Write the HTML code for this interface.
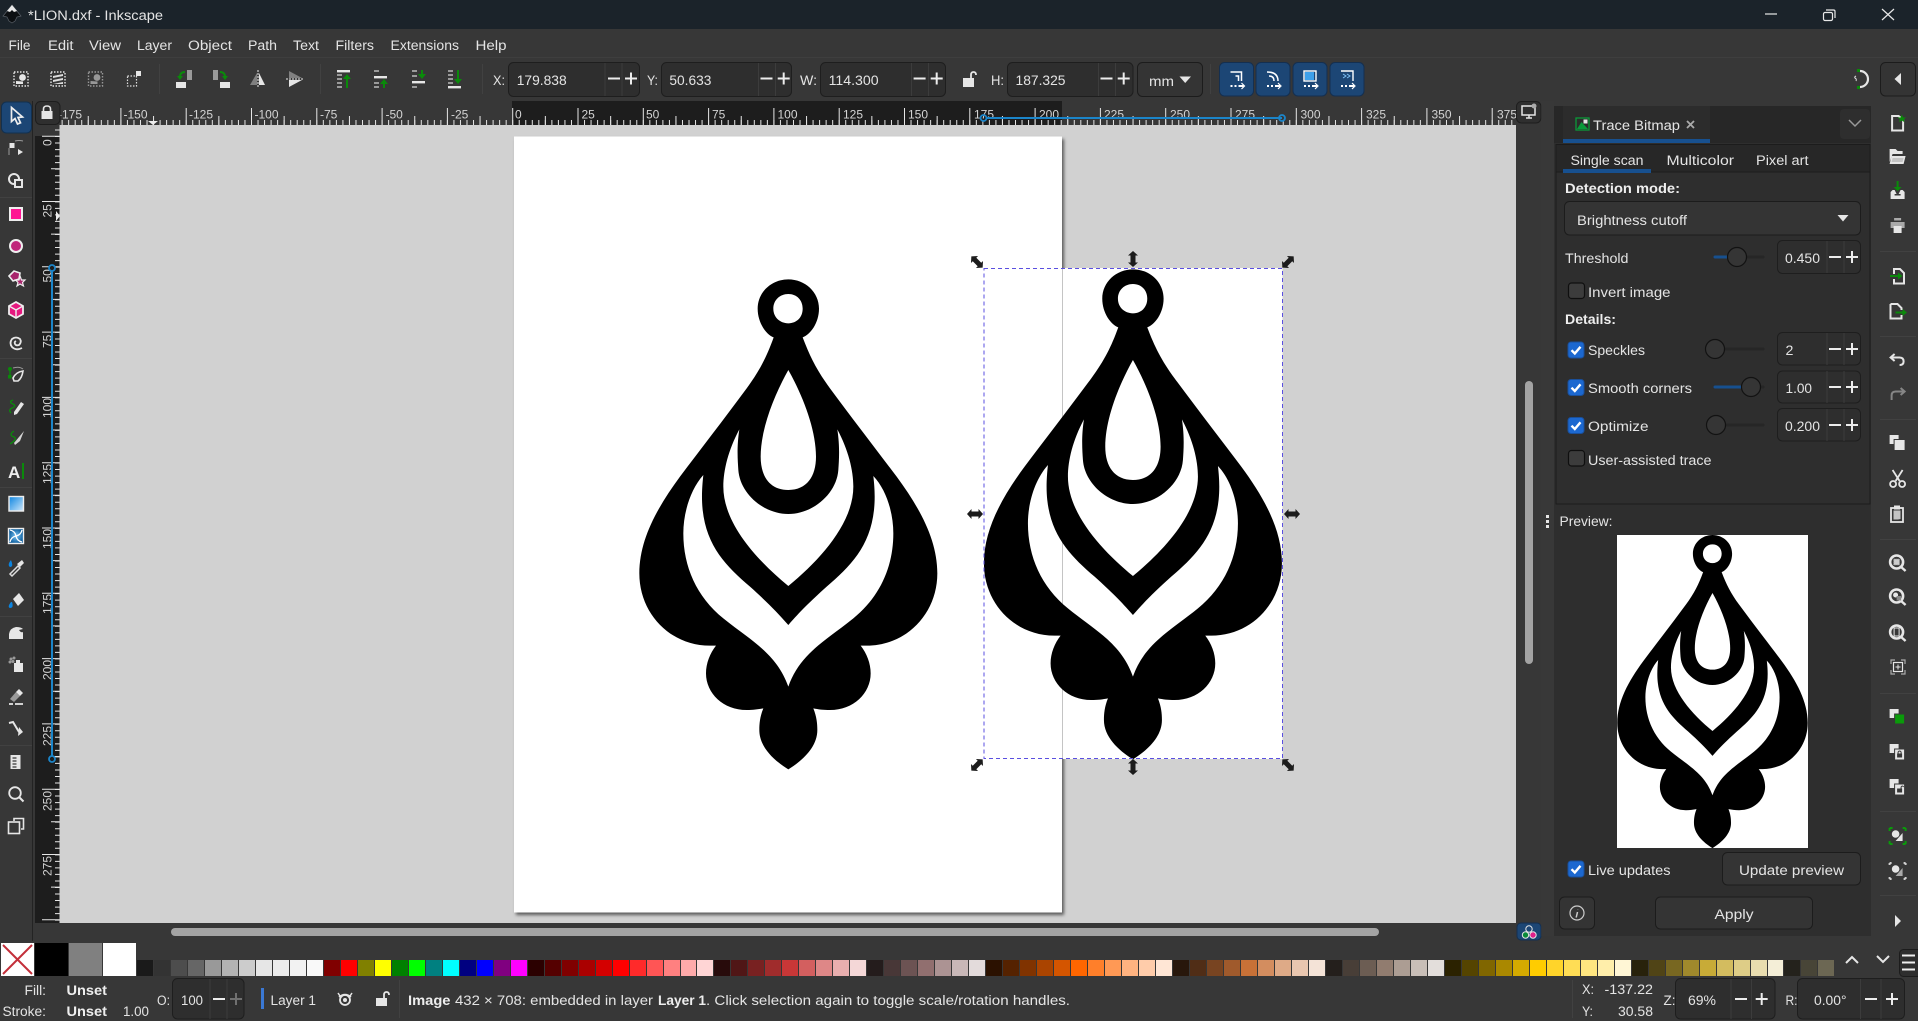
<!DOCTYPE html>
<html lang="en"><head><meta charset="utf-8"><title>*LION.dxf - Inkscape</title>
<style>
html,body{margin:0;padding:0;background:#373737;width:1918px;height:1021px;overflow:hidden}
svg{position:absolute;left:0;top:0;display:block}
text{font-family:"Liberation Sans",sans-serif;font-size:14.2px;fill:#e4e4e4}
.b{font-weight:bold;fill:#eee}
.r{font-size:12px;fill:#d4d4d4}
.i{fill:none;stroke:#e6e6e6;stroke-width:2.6}
.f{fill:#e6e6e6}
.g{fill:#0a8a0a}
.gs{fill:none;stroke:#0a8a0a;stroke-width:2}
.gt{fill:none;stroke:#0a8a0a;stroke-width:1.3}
.d{fill:#8a8a8a}
.in{fill:#2e2e2e;stroke:#1e1e1e;stroke-width:1}
.bt{fill:#343434;stroke:#1c1c1c;stroke-width:1}
.sp{stroke:#ececec;stroke-width:2;fill:none}
.sl{stroke:#3c3c3c;stroke-width:1;fill:none}
.sep{stroke:#414141;stroke-width:1}
.ck{fill:#1c68d0;stroke:#1a4f9a}
.ckm{fill:none;stroke:#fff;stroke-width:2.4}
.un{fill:#3c3c3c;stroke:#0f0f0f;stroke-width:1.2}
.trk{stroke:#262626;stroke-width:3;stroke-linecap:round}
.kn{fill:#353535;stroke:#121212;stroke-width:1.2}
#pal{position:absolute;left:137px;top:960px;width:1699px;height:16px;display:flex}
#pal i{flex:1;display:block;border-right:1px solid #373737}
#big{position:absolute;left:35px;top:943px;height:33px;display:flex}
#big i{width:33px;height:33px;margin-right:1px;display:block}
</style></head><body>
<svg width="1918" height="1021" viewBox="0 0 1918 1021" xmlns="http://www.w3.org/2000/svg">
<defs>
<path id="sh" fill-rule="evenodd" d="M608 232C630 290 650 330 690 385C760 480 830 570 890 650C960 745 1012 840 1012 940C1012 1060 920 1157 800 1157L782 1157C800 1180 812 1210 812 1240C812 1300 760 1350 690 1350C670 1350 655 1348 640 1345C650 1370 652 1390 652 1410C652 1460 610 1500 565 1528C520 1500 478 1460 478 1410C478 1390 480 1370 490 1345C475 1348 460 1350 440 1350C370 1350 318 1300 318 1240C318 1210 330 1180 348 1157L330 1157C210 1157 118 1060 118 940C118 840 170 745 240 650C300 570 370 480 440 385C480 330 500 290 521 232C500 225 473 190 473 146C473 96 515 58 565 58C615 58 657 96 657 146C657 190 630 225 608 232Z
M565 102C590 102 608 120 608 146C608 172 590 190 565 190C540 190 520 172 520 146C520 120 540 102 565 102Z
M565 330C610 410 648 510 648 590C648 650 620 690 565 690C510 690 482 650 482 590C482 510 520 410 565 330Z
M712 508C745 570 760 630 760 680C760 790 660 900 565 978C470 900 370 790 370 680C370 630 385 570 418 508C410 560 413 600 415 630C420 700 490 762 565 762C640 762 710 700 715 630C717 600 720 560 712 508Z
M820 648C860 690 880 760 880 820C880 920 840 1010 760 1075C680 1140 600 1180 565 1280C530 1180 450 1140 370 1075C290 1010 250 920 250 820C250 760 270 690 310 645C305 690 305 720 308 750C320 860 380 920 450 980C500 1025 530 1055 565 1095C600 1055 630 1025 680 980C750 920 810 860 822 750C825 720 825 690 820 648Z"/>
<path id="ha" d="M-8 0L-3.5-5V-2.500H3.500V-5L8 0L3.500 5V2.500H-3.500V5Z" fill="#1c1c1c"/>
<path id="m" class="sp" d="M-6 0H6"/>
<path id="p" class="sp" d="M-6 0H6M0-6V6"/>
<g id="ckg"><rect class="ck" x="0" y="0" width="16" height="16" rx="3"/><path class="ckm" d="M3.500 8.200L6.800 11.500L12.500 4.800"/></g>
<clipPath id="cv"><rect x="59.500" y="125" width="1456.500" height="798"/></clipPath>
<clipPath id="tr"><rect x="60" y="101" width="1456" height="24"/></clipPath>
<filter id="bl" x="-5%" y="-5%" width="110%" height="110%"><feGaussianBlur stdDeviation="1.6"/></filter>
<linearGradient id="gr" x1="0" y1="0" x2="1" y2="1"><stop offset="0" stop-color="#0b84e0"/><stop offset="1" stop-color="#cfe8fb"/></linearGradient>
<radialGradient id="me"><stop offset="0" stop-color="#7cc6f5"/><stop offset="1" stop-color="#0f5f9e"/></radialGradient>
</defs>

<rect width="1918" height="1021" fill="#373737"/>
<rect width="1918" height="29" fill="#1b232a"/>
<path d="M0 57.500H1918" stroke="#3e3e3e"/>

<g transform="translate(12,14)"><path d="M0-9L9 2L5 3L3 7L0 9L-3 7L-5 3L-9 2Z" fill="#0c0f12" stroke="#5a6068" stroke-width=".7"/><path d="M0-9L5-3L2-2L0-4L-2-2L-5-3Z" fill="#e8e8e8"/></g>
<text x="28" y="20" textLength="135" lengthAdjust="spacingAndGlyphs">*LION.dxf - Inkscape</text>
<path d="M1765 14H1777" stroke="#e8e8e8" stroke-width="1.200"/>
<g fill="none" stroke="#e8e8e8" stroke-width="1.200"><rect x="1823.500" y="12.500" width="9" height="8" rx="1.500"/><path d="M1826 10H1833.500Q1835 10 1835 11.500V18"/><path d="M1882 9L1894 20M1894 9L1882 20"/></g>

<text x="8.500" y="50" textLength="22" lengthAdjust="spacingAndGlyphs">File</text>
<text x="48" y="50" textLength="25.500" lengthAdjust="spacingAndGlyphs">Edit</text>
<text x="89" y="50" textLength="32" lengthAdjust="spacingAndGlyphs">View</text>
<text x="137" y="50" textLength="35" lengthAdjust="spacingAndGlyphs">Layer</text>
<text x="188" y="50" textLength="44" lengthAdjust="spacingAndGlyphs">Object</text>
<text x="248" y="50" textLength="29" lengthAdjust="spacingAndGlyphs">Path</text>
<text x="293" y="50" textLength="26" lengthAdjust="spacingAndGlyphs">Text</text>
<text x="335.500" y="50" textLength="38.500" lengthAdjust="spacingAndGlyphs">Filters</text>
<text x="390.500" y="50" textLength="68.500" lengthAdjust="spacingAndGlyphs">Extensions</text>
<text x="475.500" y="50" textLength="31" lengthAdjust="spacingAndGlyphs">Help</text>

<g transform="translate(21,79)"><rect x="-7" y="-7" width="14" height="14" fill="none" stroke="#e6e6e6" stroke-width="1.400" stroke-dasharray="1.500 1.500"/><circle cx="1.500" cy="-1.500" r="3.400" class="f"/><path d="M-5 5V2L2 2.500V5Z" class="f"/></g>
<g transform="translate(58,79)"><rect x="-7" y="-7" width="14" height="14" fill="none" stroke="#e6e6e6" stroke-width="1.400" stroke-dasharray="1.500 1.500"/><path d="M-5-3L5-5V-3L-5-1ZM-5 1L5-1V1L-5 3ZM-5 5L5 3V5Z" fill="#ddd"/></g>
<g transform="translate(95.500,79)" opacity=".55"><rect x="-7" y="-7" width="14" height="14" fill="none" stroke="#e6e6e6" stroke-width="1.400" stroke-dasharray="1.500 1.500"/><circle cx="1.500" cy="-1.500" r="3.400" class="f"/><path d="M-5 5V2L2 2.500V5Z" class="f"/></g>
<g transform="translate(133,79)"><rect x="-5.500" y="-3" width="9" height="10" fill="none" stroke="#ddd" stroke-width="1.200" stroke-dasharray="1.500 1.500"/><rect x="3" y="-8" width="5" height="5" class="f"/></g>
<path class="sep" d="M159.500 64V94M320.500 64V94M482.500 64V94"/>
<g transform="translate(184,79)"><rect x="-8" y="3" width="10" height="6" class="f"/><rect x="3" y="-9" width="5" height="10" fill="#9a9a9a"/><path class="gs" d="M1-7Q-4-7-4-2"/><path class="g" d="M-7-3H-1L-4 1Z"/></g>
<g transform="translate(221,79)"><rect x="-1" y="3" width="10" height="6" class="f"/><rect x="-8" y="-9" width="5" height="10" fill="#9a9a9a"/><path class="gs" d="M-1-7Q4-7 4-2"/><path class="g" d="M7-3H1L4 1Z"/></g>
<g transform="translate(258,79)"><path d="M-1-6L-8 6H-1Z" fill="#808080"/><path d="M1-6L7 6H1Z" class="f"/><path d="M0-9V9" stroke="#eee" stroke-width="1" stroke-dasharray="2 1"/></g>
<g transform="translate(295,79)"><path d="M-6-8L7-1H-6Z" fill="#808080"/><path d="M-6 1H7L-6 8Z" class="f"/><path d="M-9 0H9" stroke="#eee" stroke-width="1" stroke-dasharray="2 1"/></g>
<g transform="translate(345,79)"><rect x="-8" y="-9" width="13" height="2.400" class="f"/><path d="M-8-4H-3M-8 0H-3M-8 4H-3M-8 8H-3" stroke="#9a9a9a" stroke-width="2"/><path class="gs" d="M2 9V-2"/><path class="g" d="M2-5L6 0H-2Z"/></g>
<g transform="translate(382,79)"><path d="M-8-8H-3M-8 4H-3M-8 8H-3" stroke="#9a9a9a" stroke-width="2"/><rect x="-8" y="-3" width="13" height="2.400" class="f"/><path class="gs" d="M2 9V4"/><path class="g" d="M2 0L6 5H-2Z"/></g>
<g transform="translate(420,79)"><path d="M-8-8H-3M-8-3H-3M-8 8H-3" stroke="#9a9a9a" stroke-width="2"/><rect x="-8" y="2" width="13" height="2.400" class="f"/><path class="gs" d="M2-9V-4"/><path class="g" d="M2 0L6-5H-2Z"/></g>
<g transform="translate(456,79)"><path d="M-8-8H-3M-8-4H-3M-8 0H-3M-8 4H-3" stroke="#9a9a9a" stroke-width="2"/><rect x="-8" y="7" width="13" height="2.400" class="f"/><path class="gs" d="M2-9V2"/><path class="g" d="M2 5L6 0H-2Z"/></g>

<text x="493" y="85" textLength="12" lengthAdjust="spacingAndGlyphs">X:</text>
<rect class="in" x="508.500" y="62.500" width="131" height="34" rx="5"/><path class="sl" d="M605 63V96M622 63V96"/>
<text x="516.700" y="85" textLength="50" lengthAdjust="spacingAndGlyphs">179.838</text>
<use href="#m" x="614" y="78.500"/><use href="#p" x="631" y="78.500"/>
<text x="647" y="85" textLength="11" lengthAdjust="spacingAndGlyphs">Y:</text>
<rect class="in" x="661.500" y="62.500" width="130" height="34" rx="5"/><path class="sl" d="M758.500 63V96M775.500 63V96"/>
<text x="669.400" y="85" textLength="42" lengthAdjust="spacingAndGlyphs">50.633</text>
<use href="#m" x="766.500" y="78.500"/><use href="#p" x="783.700" y="78.500"/>
<text x="800" y="85" textLength="17" lengthAdjust="spacingAndGlyphs">W:</text>
<rect class="in" x="820.500" y="62.500" width="125" height="34" rx="5"/><path class="sl" d="M911.500 63V96M928.500 63V96"/>
<text x="828.600" y="85" textLength="50" lengthAdjust="spacingAndGlyphs">114.300</text>
<use href="#m" x="919.600" y="78.500"/><use href="#p" x="936.700" y="78.500"/>
<g transform="translate(969,80)"><rect x="-6" y="-2" width="11" height="9" class="f"/><path d="M2-2V-5Q2-8 4.500-8Q7-8 7-5" fill="none" stroke="#e6e6e6" stroke-width="1.800"/></g>
<text x="991" y="85" textLength="13" lengthAdjust="spacingAndGlyphs">H:</text>
<rect class="in" x="1007.500" y="62.500" width="125.500" height="34" rx="5"/><path class="sl" d="M1098.500 63V96M1115.500 63V96"/>
<text x="1015.500" y="85" textLength="50" lengthAdjust="spacingAndGlyphs">187.325</text>
<use href="#m" x="1106.500" y="78.500"/><use href="#p" x="1123.700" y="78.500"/>
<rect class="bt" x="1137.500" y="62.500" width="65" height="34" rx="5"/>
<text x="1149" y="86" textLength="25" lengthAdjust="spacingAndGlyphs">mm</text>
<path d="M1179.500 76.500H1191L1185.200 83Z" fill="#e6e6e6"/>
<path class="sep" d="M1210.500 64V94"/>

<g fill="#1c4675" stroke="#142f50"><rect x="1219.500" y="62.500" width="34" height="33.500" rx="5"/><rect x="1256" y="62.500" width="34" height="33.500" rx="5"/><rect x="1293" y="62.500" width="34" height="33.500" rx="5"/><rect x="1330" y="62.500" width="34" height="33.500" rx="5"/></g>
<g transform="translate(1236.500,79)" fill="none" stroke="#fff" stroke-width="1.500"><path d="M-6-7H5V2M-1-3H2V2"/><path d="M-6 7H-4M-2 7H0M2 7H7" stroke-width="2"/><path d="M5 4L8 7L5 10" stroke-width="1.200"/></g>
<g transform="translate(1273,79)" fill="none" stroke="#fff" stroke-width="1.500"><path d="M-6-7Q5-7 5 2M-4-3Q1-3 1 2"/><path d="M-6 7H-4M-2 7H0M2 7H7" stroke-width="2"/><path d="M5 4L8 7L5 10" stroke-width="1.200"/></g>
<g transform="translate(1310,79)"><rect x="-6" y="-8" width="12" height="10" fill="none" stroke="#fff" stroke-width="1.400"/><rect x="-5" y="-7" width="9" height="8" fill="#3da0ea"/><path d="M-6 7H-4M-2 7H0M2 7H7" stroke="#fff" stroke-width="2"/><path d="M5 4L8 7L5 10" fill="none" stroke="#fff" stroke-width="1.200"/></g>
<g transform="translate(1347,79)"><path d="M-6-8H6V2" fill="none" stroke="#fff" stroke-width="1.400"/><path d="M-4-5L-1-3L-4-1M0-5L3-3L0-1" fill="none" stroke="#7cc0f5" stroke-width="1"/><path d="M-6 7H-4M-2 7H0M2 7H7" stroke="#fff" stroke-width="2"/><path d="M5 4L8 7L5 10" fill="none" stroke="#fff" stroke-width="1.200"/></g>

<g transform="translate(1861,79)"><path d="M-1-8A8 8 0 1 1-1 8" fill="none" stroke="#e6e6e6" stroke-width="2.200"/><rect x="-4" y="-10" width="3" height="3" class="g"/><rect x="-4" y="7" width="3" height="3" class="g"/><path d="M-5-3Q-7-2-6-1Q-4 0-5 2" fill="none" stroke="#ddd" stroke-width="1"/></g>
<rect class="bt" x="1880.500" y="62.500" width="35" height="33.500" rx="5"/>
<path d="M1901 73V85L1894.500 79Z" class="f"/>

<path d="M32.500 101V941" stroke="#232323"/>
<rect x="35" y="136" width="25" height="787" fill="#1d1d1d"/>
<rect x="512" y="101" width="550" height="24" fill="#1d1d1d"/>

<g clip-path="url(#tr)" stroke="#e6e6e6" stroke-width="1">
<path d="M55.100 122.500H1516" stroke-width="5" stroke-dasharray="1 5.530" fill="none"/>
<path d="M87.750 120.500H1516" stroke-width="9" stroke-dasharray="1 64.300" fill="none"/>
<path d="M55.100 116.500H1516" stroke-width="17" stroke-dasharray="1 64.300" fill="none"/>
</g>
<g clip-path="url(#tr)">
<text class="r" x="58" y="118.500">-175</text><text class="r" x="123.500" y="118.500">-150</text><text class="r" x="189" y="118.500">-125</text><text class="r" x="254.500" y="118.500">-100</text><text class="r" x="320" y="118.500">-75</text><text class="r" x="385.500" y="118.500">-50</text><text class="r" x="451" y="118.500">-25</text>
<text class="r" x="515" y="118.500">0</text><text class="r" x="581.500" y="118.500">25</text><text class="r" x="646" y="118.500">50</text><text class="r" x="712" y="118.500">75</text><text class="r" x="777.500" y="118.500">100</text><text class="r" x="843" y="118.500">125</text><text class="r" x="908" y="118.500">150</text><text class="r" x="974" y="118.500">175</text><text class="r" x="1039" y="118.500">200</text><text class="r" x="1104" y="118.500">225</text><text class="r" x="1170" y="118.500">250</text><text class="r" x="1235" y="118.500">275</text><text class="r" x="1300.500" y="118.500">300</text><text class="r" x="1366" y="118.500">325</text><text class="r" x="1431.500" y="118.500">350</text><text class="r" x="1497" y="118.500">375</text>
</g>
<path d="M148 121H158L153 125Z" fill="#eee"/>
<path d="M986 118H1282" stroke="#1b85c9" stroke-width="2" fill="none"/>
<circle cx="983.500" cy="118" r="3" fill="none" stroke="#1b85c9" stroke-width="1.800"/><circle cx="1282" cy="118" r="3" fill="none" stroke="#1b85c9" stroke-width="1.800"/>

<path d="M57.500 129.500V923" stroke="#e6e6e6" stroke-width="5" stroke-dasharray="1 5.530" fill="none"/>
<path d="M55.500 168.300V923" stroke="#e6e6e6" stroke-width="9" stroke-dasharray="1 64.300" fill="none"/>
<path d="M51 135.700V923" stroke="#e6e6e6" stroke-width="18" stroke-dasharray="1 64.300" fill="none"/>
<g>
<text class="r" transform="translate(51.500,146) rotate(-90)">0</text>
<text class="r" transform="translate(51.500,217.500) rotate(-90)">25</text>
<text class="r" transform="translate(51.500,282.500) rotate(-90)">50</text>
<text class="r" transform="translate(51.500,348) rotate(-90)">75</text>
<text class="r" transform="translate(51.500,418) rotate(-90)">100</text>
<text class="r" transform="translate(51.500,484) rotate(-90)">125</text>
<text class="r" transform="translate(51.500,549) rotate(-90)">150</text>
<text class="r" transform="translate(51.500,614) rotate(-90)">175</text>
<text class="r" transform="translate(51.500,680) rotate(-90)">200</text>
<text class="r" transform="translate(51.500,746) rotate(-90)">225</text>
<text class="r" transform="translate(51.500,811) rotate(-90)">250</text>
<text class="r" transform="translate(51.500,876) rotate(-90)">275</text>
</g>
<path d="M56 211V221L60 216Z" fill="#eee"/>
<path d="M52 270V760" stroke="#1b85c9" stroke-width="2"/>
<circle cx="52" cy="268" r="3" fill="#1d1d1d" stroke="#1b85c9" stroke-width="1.800"/><circle cx="52" cy="759" r="3" fill="#1d1d1d" stroke="#1b85c9" stroke-width="1.800"/>

<rect x="35.500" y="101.500" width="24.500" height="23" rx="5" fill="#2f2f2f" stroke="#1e1e1e"/>
<g transform="translate(47,113)"><rect x="-5.500" y="-2" width="11" height="8" class="f"/><path d="M-3.500-2V-4Q-3.500-7 0-7Q3.500-7 3.500-4V-2" fill="none" stroke="#e6e6e6" stroke-width="1.600"/></g>

<g clip-path="url(#cv)">
<rect x="59.500" y="125" width="1456.500" height="798" fill="#d1d1d1"/>
<rect x="516" y="139" width="548" height="776" fill="#5a5a5a" filter="url(#bl)"/>
<rect x="514" y="136.500" width="548" height="776" fill="#fff"/>
<use href="#sh" transform="translate(600,260) scale(.33333)"/>
<rect x="984" y="268" width="298.500" height="491" fill="#fff"/>
<path d="M1062.500 268V759" stroke="#c4c4c4"/>
<use href="#sh" transform="translate(944.600,250) scale(.33333)"/>
<rect x="984" y="268.500" width="298.500" height="490" fill="none" stroke="#5a4fe0" stroke-width="1" stroke-dasharray="4 3"/>
<use href="#ha" transform="translate(977,262) rotate(45)"/>
<use href="#ha" transform="translate(1288,262) rotate(-45)"/>
<use href="#ha" transform="translate(977,765) rotate(-45)"/>
<use href="#ha" transform="translate(1288,765) rotate(45)"/>
<use href="#ha" transform="translate(1133,259) rotate(90)"/>
<use href="#ha" transform="translate(1133,767) rotate(90)"/>
<use href="#ha" transform="translate(975,514)"/>
<use href="#ha" transform="translate(1292,514)"/>
</g>

<rect x="171" y="928" width="1208" height="8" rx="4" fill="#a3a3a3"/>
<rect x="1525" y="381" width="8" height="283" rx="4" fill="#a3a3a3"/>
<rect x="1516.500" y="101.500" width="24.500" height="21.500" rx="5" fill="#2f2f2f" stroke="#1e1e1e"/>
<g transform="translate(1529,112)"><rect x="-7" y="-6" width="13" height="9" fill="none" stroke="#e6e6e6" stroke-width="1.500"/><path d="M-3 6H3M0 3V6" stroke="#e6e6e6" stroke-width="1.500"/><circle cx="5" cy="-6" r="2.500" fill="#aaa"/></g>
<rect x="1517" y="923" width="24" height="17" rx="4" fill="#1c4675" stroke="#142f50"/>
<g fill="none" stroke="#e6e6e6" stroke-width="1"><circle cx="1529" cy="929" r="3.200"/></g><circle cx="1525.500" cy="935" r="3.200" fill="#0a8a3a" stroke="#e6e6e6"/><circle cx="1533" cy="935" r="3.200" fill="#e0208a" stroke="#e6e6e6"/>

<rect x="1541" y="101" width="13" height="835" fill="#3a3a3a" opacity=".5"/>
<rect x="1554" y="106" width="317" height="830" fill="#2e2e2e"/>
<rect x="1554" y="106" width="317" height="37" fill="#272727"/>
<rect x="1563" y="106" width="147" height="37" fill="#2c2c2c"/>
<rect x="1563" y="139" width="147" height="4" fill="#17508f"/>
<rect x="1576" y="118" width="13" height="12" fill="none" stroke="#0a9a3a" stroke-width="1.300"/><path d="M1577 129L1581.500 122L1588 129Z" fill="#0a9a3a"/><rect x="1583.500" y="119.500" width="4" height="4" fill="#e6e6e6"/>
<text x="1593" y="130" textLength="87" lengthAdjust="spacingAndGlyphs">Trace Bitmap</text>
<path d="M1687 121L1694 128M1694 121L1687 128" stroke="#aaa" stroke-width="1.800"/>
<rect x="1840" y="109" width="30" height="30" rx="4" fill="#2e2e2e"/>
<path d="M1849 120L1855 126L1861 120" fill="none" stroke="#999" stroke-width="1.500"/>

<rect x="1556" y="144.500" width="314" height="359.500" fill="#2e2e2e" stroke="#1c1c1c"/>
<rect x="1556.500" y="145" width="313" height="27" fill="#272727"/>
<path d="M1556 172H1870" stroke="#1c1c1c"/>
<rect x="1563" y="169" width="88" height="4" fill="#17508f"/>
<text x="1570.500" y="165" textLength="73" lengthAdjust="spacingAndGlyphs">Single scan</text>
<text x="1666.500" y="165" textLength="67.500" lengthAdjust="spacingAndGlyphs">Multicolor</text>
<text x="1756" y="165" textLength="52.500" lengthAdjust="spacingAndGlyphs">Pixel art</text>

<text class="b" x="1565" y="193" textLength="115" lengthAdjust="spacingAndGlyphs">Detection mode:</text>
<rect class="bt" x="1564.500" y="201.500" width="296" height="33.500" rx="5"/>
<text x="1577" y="225" textLength="110" lengthAdjust="spacingAndGlyphs">Brightness cutoff</text>
<path d="M1837.500 215H1848.500L1843 221.500Z" class="f"/>

<text x="1565" y="263" textLength="63.500" lengthAdjust="spacingAndGlyphs">Threshold</text>
<path class="trk" d="M1716 257H1763"/><path d="M1715 257H1730" stroke="#17508f" stroke-width="3" stroke-linecap="round"/>
<circle class="kn" cx="1737" cy="257" r="9.500"/>
<rect class="in" x="1777.500" y="240.500" width="83" height="33" rx="5"/><path class="sl" d="M1827 241V273M1844 241V273"/>
<text x="1785" y="263" textLength="35" lengthAdjust="spacingAndGlyphs">0.450</text>
<use href="#m" x="1835" y="257"/><use href="#p" x="1852" y="257"/>

<rect class="un" x="1568.500" y="283" width="16" height="15.500" rx="3"/>
<text x="1588" y="297" textLength="82.500" lengthAdjust="spacingAndGlyphs">Invert image</text>
<text class="b" x="1565" y="324" textLength="51" lengthAdjust="spacingAndGlyphs">Details:</text>

<use href="#ckg" x="1568" y="342"/>
<text x="1588" y="355" textLength="57" lengthAdjust="spacingAndGlyphs">Speckles</text>
<path class="trk" d="M1716 349H1763"/><circle class="kn" cx="1715" cy="349" r="9.500"/>
<rect class="in" x="1777.500" y="332.500" width="83" height="32.500" rx="5"/><path class="sl" d="M1827 333V365M1844 333V365"/>
<text x="1785.500" y="355">2</text>
<use href="#m" x="1835" y="349"/><use href="#p" x="1852" y="349"/>

<use href="#ckg" x="1568" y="379.500"/>
<text x="1588" y="393" textLength="104" lengthAdjust="spacingAndGlyphs">Smooth corners</text>
<path class="trk" d="M1716 387H1763"/><path d="M1715 387H1743" stroke="#17508f" stroke-width="3" stroke-linecap="round"/>
<circle class="kn" cx="1751" cy="387" r="9.500"/>
<rect class="in" x="1777.500" y="371" width="83" height="32" rx="5"/><path class="sl" d="M1827 371V403M1844 371V403"/>
<text x="1785.500" y="393" textLength="26.500" lengthAdjust="spacingAndGlyphs">1.00</text>
<use href="#m" x="1835" y="387"/><use href="#p" x="1852" y="387"/>

<use href="#ckg" x="1568" y="417.500"/>
<text x="1588" y="431" textLength="60.500" lengthAdjust="spacingAndGlyphs">Optimize</text>
<path class="trk" d="M1716 425H1763"/><circle class="kn" cx="1716" cy="425" r="9.500"/>
<rect class="in" x="1777.500" y="408.500" width="83" height="32.500" rx="5"/><path class="sl" d="M1827 409V441M1844 409V441"/>
<text x="1785" y="431" textLength="35" lengthAdjust="spacingAndGlyphs">0.200</text>
<use href="#m" x="1835" y="425"/><use href="#p" x="1852" y="425"/>

<rect class="un" x="1568.500" y="450.500" width="16" height="15.500" rx="3"/>
<text x="1588" y="465" textLength="123.500" lengthAdjust="spacingAndGlyphs">User-assisted trace</text>

<g class="f"><rect x="1546" y="515" width="3" height="3"/><rect x="1546" y="520" width="3" height="3"/><rect x="1546" y="525" width="3" height="3"/></g>
<text x="1559.500" y="526" textLength="53" lengthAdjust="spacingAndGlyphs">Preview:</text>
<rect x="1617" y="535" width="191" height="313" fill="#fff"/>
<use href="#sh" transform="translate(1592.150,522.650) scale(.213)"/>

<use href="#ckg" x="1568" y="861"/>
<text x="1588" y="875" textLength="82.500" lengthAdjust="spacingAndGlyphs">Live updates</text>
<rect class="bt" x="1722.500" y="852.500" width="138" height="32.500" rx="5"/>
<text x="1739" y="875" textLength="105" lengthAdjust="spacingAndGlyphs">Update preview</text>
<rect class="bt" x="1559.500" y="897" width="35" height="32" rx="5"/>
<circle cx="1577" cy="913" r="7" fill="none" stroke="#ccc" stroke-width="1.200"/>
<path d="M1577.800 909.500V909.700M1577.500 912L1576.200 917.500" stroke="#ccc" stroke-width="1.500"/>
<rect class="bt" x="1655.500" y="897" width="157" height="32" rx="5"/>
<text x="1714.500" y="919" textLength="39" lengthAdjust="spacingAndGlyphs">Apply</text>

<g transform="translate(1897.600,123)"><path d="M-5.500-7H1L5.500-3V7.500H-5.500Z" fill="none" stroke="#e6e6e6" stroke-width="2"/><path d="M5-10L6.500-6.500L10-6.500L7.500-4.500L8-1L5-3L2-1L2.500-4.500L0-6.500L3.500-6.500Z" class="g" transform="scale(.85)"/></g>
<g transform="translate(1897.600,157)"><path d="M-8-8H-2L0-6H5V-3H-5L-8 5Z" class="f"/><path d="M-6-1H8L6 7H-8Z" fill="#e6e6e6"/><path d="M-5 1H6L5 5H-6Z" fill="#c4c4c4"/></g>
<g transform="translate(1897.600,192)"><path d="M-7 0L-7 7H7V0L5-2H3L1 2H-1L-3-2H-5Z" class="f"/><rect x="-3" y="2" width="6" height="1.500" fill="#373737"/><path d="M0-11V-4" class="gs"/><path d="M-4-5H4L0-1Z" class="g"/></g>
<g transform="translate(1897.600,226)"><rect x="-3.500" y="-8" width="7" height="2.500" fill="#aaa"/><rect x="-7" y="-4" width="14" height="6" fill="#aaa"/><rect x="-4" y="0" width="8" height="7" class="f"/></g>
<path class="sep" d="M1880 251.500H1916M1880 336.500H1916M1880 419.500H1916M1880 539.500H1916M1880 693.500H1916M1880 811.500H1916M1880 895.500H1916"/>
<g transform="translate(1899,276)"><path d="M-5-2V-7H1L5-3V7.500H-5V3" fill="none" stroke="#e6e6e6" stroke-width="2"/><path d="M-9 0H1" class="gs"/><path d="M-1-3.500L3.500 0L-1 3.500Z" class="g"/></g>
<g transform="translate(1896.500,311)"><path d="M-6-7H1L5-3V-1M5 4V7.500H-6V-7" fill="none" stroke="#e6e6e6" stroke-width="2"/><path d="M-1 1.500H8" class="gs"/><path d="M6-2L10.500 1.500L6 5Z" class="g"/></g>
<g transform="translate(1897.600,360)"><path d="M-3-6L-7-2.500L-3 1M-7-2.500H2Q6-2.500 6 1.500Q6 5 2 5" fill="none" stroke="#e6e6e6" stroke-width="2"/></g>
<g transform="translate(1897.600,394)" opacity=".45"><path d="M3-6L7-2.500L3 1M7-2.500H-2Q-6-2.500-6 1.500Q-6 5-6 6" fill="none" stroke="#e6e6e6" stroke-width="2"/></g>
<g transform="translate(1897.600,443)"><rect x="-8" y="-8" width="9" height="9" fill="#e6e6e6"/><rect x="-3.500" y="-3.500" width="11" height="11" fill="#e6e6e6" stroke="#373737" stroke-width="1"/></g>
<g transform="translate(1897.600,479)" fill="none" stroke="#e6e6e6" stroke-width="1.800"><path d="M-5-9L2 2M5-9L-2 2"/><circle cx="-4.500" cy="5" r="3"/><circle cx="4.500" cy="5" r="3"/></g>
<g transform="translate(1897,514)"><rect x="-6" y="-6" width="12" height="14" fill="none" stroke="#e6e6e6" stroke-width="1.800"/><rect x="-3" y="-8.500" width="6" height="4" class="f"/><path d="M-3.500-3.500H3.500V5L1 5.500H-3.500Z" fill="#c4c4c4"/></g>
<g transform="translate(1897.600,563)"><circle cx="-1" cy="-1" r="6.500" class="i"/><path d="M3.500 4L8 8" stroke="#e6e6e6" stroke-width="2.400"/><rect x="-4" y="-4" width="6" height="6" fill="#ccc" stroke="#888" stroke-dasharray="1 1"/></g>
<g transform="translate(1897.600,597)"><circle cx="-1" cy="-1" r="6.500" class="i"/><path d="M3.500 4L8 8" stroke="#e6e6e6" stroke-width="2.400"/><circle cx="-2" cy="-2" r="2.500" class="f"/><rect x="-1" y="-1" width="4.500" height="4.500" fill="#888"/></g>
<g transform="translate(1897.600,633)"><circle cx="-1" cy="-1" r="6.500" class="i"/><path d="M3.500 4L8 8" stroke="#e6e6e6" stroke-width="2.400"/><rect x="-3.500" y="-5" width="5" height="8" fill="#373737" stroke="#e6e6e6"/></g>
<g transform="translate(1898,667)"><path d="M-7-3V-7H-3M3-7H7V-3M7 3V7H3M-3 7H-7V3" fill="none" stroke="#aaa" stroke-width="1.200"/><rect x="-4.500" y="-4.500" width="9" height="9" fill="none" stroke="#e6e6e6" stroke-width="1.200"/><path d="M-2.500 0H2.500M0-2.500V2.500" stroke="#e6e6e6"/></g>
<g transform="translate(1897.600,717)"><rect x="-8" y="-8" width="9" height="9" class="f"/><rect x="-3" y="-3" width="10" height="10" fill="#0a9a0a" stroke="#373737"/></g>
<g transform="translate(1897.600,752)"><rect x="-8" y="-8" width="9" height="9" class="f"/><rect x="-3" y="-3" width="10" height="11" fill="#e6e6e6" stroke="#373737"/><rect x="-0.500" y="1.500" width="5" height="4" fill="#373737"/><path d="M0.500 1.500V0Q2-2 3.500 0V1.500" fill="none" stroke="#373737"/></g>
<g transform="translate(1897.600,787)"><rect x="-8" y="-8" width="9" height="9" class="f"/><rect x="-3" y="-3" width="10" height="11" fill="#e6e6e6" stroke="#373737"/><rect x="-0.500" y="1.500" width="5" height="4" fill="#373737"/><path d="M3.500 1.500V0Q5-2 6 0" fill="none" stroke="#373737"/></g>
<g transform="translate(1897.600,836)"><path d="M-8-8H-5M-8-8V-5M8-8H5M8-8V-5M-8 8H-5M-8 8V5M8 8H5M8 8V5" stroke="#0a9a0a" stroke-width="2" fill="none"/><circle cx="-2" cy="-2" r="3.800" class="f"/><path d="M5-3L5 5H-2Z" class="f"/></g>
<g transform="translate(1897.600,871)"><path d="M-8-8H-5M-8-8V-5M8-8H5M8-8V-5M-8 8H-5M-8 8V5M8 8H5M8 8V5" stroke="#cfcfcf" stroke-width="2" fill="none" stroke-dasharray="2 1"/><circle cx="-2" cy="-2" r="3.800" class="f"/><path d="M5-3L5 5H-2Z" fill="#aaa"/></g>
<path d="M1895 915V927L1901 921Z" class="f"/>

<rect x="1.500" y="102" width="30" height="31" rx="5" fill="#1c4675" stroke="#12304f"/>
<path d="M11.500 107.500V121.500L15 118.500L17.500 124L20.500 122.800L18 117.500L22.500 117Z" fill="#1c4675" stroke="#eee" stroke-width="1.700"/>
<g transform="translate(16,149)"><rect x="-6.500" y="-6" width="5" height="5" class="f"/><path d="M-1-8Q3-9 7-8M-7-1V6" stroke="#999" fill="none"/><path d="M2 0L7 3L2 6Z" class="f"/></g>
<g transform="translate(16,181)"><circle cx="-2" cy="-2" r="5" fill="none" stroke="#e6e6e6" stroke-width="2"/><rect x="-1" y="-1" width="7" height="7" fill="#373737" stroke="#e6e6e6" stroke-width="2"/></g>
<path class="sep" d="M0 197.500H32M0 358.500H32M0 487.500H32M0 616.500H32M0 745.500H32"/>
<rect x="10" y="208" width="12" height="12" fill="#ff1493" stroke="#eee" stroke-width="2"/>
<circle cx="16" cy="246" r="6" fill="#c0257a" stroke="#eee" stroke-width="2"/>
<g transform="translate(16,278)"><path d="M-7-2L-2-7L4-5L3 1L-3 3Z" fill="#a8256c" stroke="#eee" stroke-width="1.600"/><path d="M4-2L5.500 2L9 2L6.500 4.500L7.500 8L4 6L1 8L2 4.500L-.5 2L3 2Z" fill="#a8256c" stroke="#eee" stroke-width="1.200"/></g>
<g transform="translate(16,310)"><path d="M0-8L7-4V4L0 8L-7 4V-4Z" fill="#e6187f" stroke="#eee" stroke-width="1.800"/><path d="M-7-4L0 0L7-4M0 0V8" stroke="#eee" fill="none" stroke-width="1.400"/></g>
<g transform="translate(16,343)"><path d="M6 5Q0 8-4 4Q-7 0-4-4Q0-7 4-4Q6-1 3 2Q0 3-1 1Q-2-1 0-2" fill="none" stroke="#e6e6e6" stroke-width="1.800"/></g>
<g transform="translate(16,375)"><circle cx="-6" cy="-6" r="2" class="g"/><rect x="-8" y="0" width="3.500" height="3.500" class="g"/><path d="M-6-5V1" class="gt"/><path d="M-3-7Q3-9 7-6" stroke="#999" fill="none"/><path d="M7-4Q6 3 2 6L-2 6L-3 3Q0-3 7-4Z" fill="none" stroke="#e6e6e6" stroke-width="1.600"/></g>
<g transform="translate(16,407)"><path d="M-3-7Q-8-5-3-3Q1-1-4 1Q-8 3-5 6" class="gt"/><path d="M-2 5L5-5L8-3L1 7L-2 8Z" class="f"/></g>
<g transform="translate(16,438)"><path d="M-2-7Q-8-3-2-1Q2 1-6 6" class="gt"/><path d="M-2 5L8-7L4 3L-1 7Z" fill="#d4d4d4"/></g>
<text x="8" y="478" style="font-size:17px;font-weight:bold;fill:#eee">A</text><rect x="22" y="463" width="2" height="16" class="g"/>
<rect x="9" y="496.500" width="14.500" height="14.500" fill="url(#gr)" stroke="#eee" stroke-width="1.400"/>
<g transform="translate(16,536)"><rect x="-7.500" y="-7.500" width="15" height="15" fill="url(#me)" stroke="#eee" stroke-width="1.400"/><path d="M0 0Q-1-5-6-6M0 0Q5-1 6-6M0 0Q1 5 6 6M0 0Q-5 1-6 6" stroke="#fff" stroke-width="1.300" fill="none"/></g>
<g transform="translate(16,568)"><path d="M-5-8Q-9-3-6-1Q-3-1-4-5Z" fill="#0b84e0"/><path d="M-4 8L-6 6L2-2L4 0Z" fill="none" stroke="#ddd" stroke-width="1.500"/><path d="M1-4L6-8L8-5L4-1Z" class="f"/></g>
<g transform="translate(16,600)"><path d="M-3-1L3-7L8 0L2 6Z" class="f"/><path d="M-5 2Q-9 7-6 8Q-2 8-4 2Z" fill="#0b84e0"/></g>
<g transform="translate(16,633)"><path d="M-7 6V1Q-6-5 0-6Q5-6 7-4L3-3Q5 0 7-1V6Z" class="f"/></g>
<g transform="translate(16,665)"><rect x="-2" y="-2" width="9" height="9" class="f"/><rect x="0" y="-5" width="4" height="3" class="f"/><g fill="#999"><circle cx="-5" cy="-6" r="1.500"/><circle cx="-2" cy="-7" r="1.500"/><circle cx="-6" cy="-3" r="1.500"/><circle cx="-3" cy="-3.500" r="1.500"/></g></g>
<g transform="translate(16,697)"><path d="M-6 2L0-5L4-1L-2 5Z" fill="#999"/><path d="M0-5L3-8L7-4L4-1Z" class="f"/><path d="M-7 7H-3M-1 7H7" stroke="#e6e6e6" stroke-width="1.800"/></g>
<g transform="translate(16,729)"><path d="M-7-6L-3-7Q0-2 3 3" fill="none" stroke="#e6e6e6" stroke-width="2"/><path d="M3-2L7 3L2 7Z" class="f"/></g>
<g transform="translate(15.500,762)"><path d="M-5-7H5V7H-5Z" class="f"/><path d="M-3-4H1M-3-1H1M-3 2H1M-3 5H1" stroke="#373737" stroke-width="1.200"/></g>
<g transform="translate(16,794)"><circle cx="-1" cy="-1" r="5.800" fill="none" stroke="#e6e6e6" stroke-width="1.800"/><path d="M3.500 3.500L7.500 7.500" stroke="#e6e6e6" stroke-width="2"/></g>
<g transform="translate(16,826)"><path d="M-2-5V-7.500H7.500V3H5" fill="none" stroke="#e6e6e6" stroke-width="1.600"/><rect x="-7.500" y="-4" width="11" height="11.500" fill="#373737" stroke="#e6e6e6" stroke-width="1.600"/></g>

<rect x="1" y="943" width="33" height="33" fill="#fff"/>
<path d="M3 945L32 974M32 945L3 974" stroke="#c32f3a" stroke-width="2"/>

<path d="M1846 963L1852 957L1858 963M1877 956L1883 962L1889 956" fill="none" stroke="#e6e6e6" stroke-width="2"/>
<rect x="1899.500" y="949.500" width="22" height="27" rx="4" fill="#2e2e2e" stroke="#1c1c1c"/>
<path d="M1902 955.500H1915M1902 962.500H1915M1902 969.500H1915" stroke="#eee" stroke-width="2"/>

<text x="24.500" y="995" textLength="21.500" lengthAdjust="spacingAndGlyphs">Fill:</text>
<text class="b" x="66.500" y="995" textLength="40.500" lengthAdjust="spacingAndGlyphs">Unset</text>
<text x="2.500" y="1016" textLength="43.500" lengthAdjust="spacingAndGlyphs">Stroke:</text>
<text class="b" x="66.500" y="1016" textLength="40.500" lengthAdjust="spacingAndGlyphs">Unset</text>
<text x="123" y="1016" textLength="26" lengthAdjust="spacingAndGlyphs">1.00</text>
<text x="157" y="1005" textLength="13" lengthAdjust="spacingAndGlyphs">O:</text>
<rect class="in" x="172.500" y="978.500" width="71.500" height="40.500" rx="5"/><path class="sl" d="M210 979V1019M227 979V1019"/>
<text x="181" y="1005" textLength="22" lengthAdjust="spacingAndGlyphs">100</text>
<use href="#m" x="219" y="999"/><g opacity=".35"><use href="#p" x="236" y="999"/></g>
<rect x="261" y="988" width="3" height="21" fill="#3a78d4"/>
<text x="270.500" y="1005" textLength="45.500" lengthAdjust="spacingAndGlyphs">Layer 1</text>
<g transform="translate(345,999)"><path d="M-6-2Q0-7 6-2M-7-6L-5-3M7-6L5-3" fill="none" stroke="#e6e6e6" stroke-width="1.500"/><circle cy="1" r="5" fill="none" stroke="#e6e6e6" stroke-width="1.800"/><circle cy="1" r="2" class="f"/></g>
<g transform="translate(382,999)"><rect x="-6" y="-1" width="11" height="8" class="f"/><path d="M2-1V-4Q2-7 4.500-7Q7-7 7-4" fill="none" stroke="#e6e6e6" stroke-width="1.800"/></g>
<path class="sep" d="M399.500 980V1018M1572.500 980V1018"/>
<text class="b" x="408" y="1005" textLength="42.500" lengthAdjust="spacingAndGlyphs">Image</text>
<text x="455" y="1005" textLength="198" lengthAdjust="spacingAndGlyphs">432 × 708: embedded in layer</text>
<text class="b" x="658" y="1005" textLength="48" lengthAdjust="spacingAndGlyphs">Layer 1</text>
<text x="706" y="1005" textLength="364" lengthAdjust="spacingAndGlyphs">. Click selection again to toggle scale/rotation handles.</text>

<text x="1582" y="994" textLength="12" lengthAdjust="spacingAndGlyphs">X:</text>
<text x="1604.500" y="994" textLength="48.500" lengthAdjust="spacingAndGlyphs">-137.22</text>
<text x="1582" y="1016" textLength="11" lengthAdjust="spacingAndGlyphs">Y:</text>
<text x="1618" y="1016" textLength="35" lengthAdjust="spacingAndGlyphs">30.58</text>
<text x="1663.500" y="1005" textLength="12" lengthAdjust="spacingAndGlyphs">Z:</text>
<rect class="in" x="1675.500" y="978.500" width="99.500" height="40.500" rx="5"/><path class="sl" d="M1731 979V1019M1751.500 979V1019"/>
<text x="1688" y="1005" textLength="28" lengthAdjust="spacingAndGlyphs">69%</text>
<use href="#m" x="1741" y="999"/><use href="#p" x="1761.700" y="999"/>
<text x="1785.500" y="1005" textLength="12" lengthAdjust="spacingAndGlyphs">R:</text>
<rect class="in" x="1797.500" y="978.500" width="107" height="40.500" rx="5"/><path class="sl" d="M1860.500 979V1019M1881 979V1019"/>
<text x="1814" y="1005" textLength="32.500" lengthAdjust="spacingAndGlyphs">0.00°</text>
<use href="#m" x="1871" y="999"/><use href="#p" x="1892" y="999"/>
</svg>

<div id="big"><i style="background:#000"></i><i style="background:#808080"></i><i style="background:#fff"></i></div>
<div id="pal"><i style="background:#1a1a1a"></i><i style="background:#333"></i><i style="background:#4d4d4d"></i><i style="background:#666"></i><i style="background:#999"></i><i style="background:#b3b3b3"></i><i style="background:#ccc"></i><i style="background:#e6e6e6"></i><i style="background:#ececec"></i><i style="background:#f2f2f2"></i><i style="background:#f9f9f9"></i><i style="background:#800000"></i><i style="background:#f00"></i><i style="background:#808000"></i><i style="background:#ff0"></i><i style="background:#008000"></i><i style="background:#0f0"></i><i style="background:#008080"></i><i style="background:#0ff"></i><i style="background:#000080"></i><i style="background:#00f"></i><i style="background:#800080"></i><i style="background:#f0f"></i><i style="background:#2b0000"></i><i style="background:#500"></i><i style="background:#800000"></i><i style="background:#a00"></i><i style="background:#d40000"></i><i style="background:#f00"></i><i style="background:#ff2a2a"></i><i style="background:#f55"></i><i style="background:#ff8080"></i><i style="background:#faa"></i><i style="background:#ffd5d5"></i><i style="background:#280b0b"></i><i style="background:#501616"></i><i style="background:#782121"></i><i style="background:#a02c2c"></i><i style="background:#c83737"></i><i style="background:#d35f5f"></i><i style="background:#de8787"></i><i style="background:#e9afaf"></i><i style="background:#f4d7d7"></i><i style="background:#241c1c"></i><i style="background:#483737"></i><i style="background:#6c5353"></i><i style="background:#916f6f"></i><i style="background:#ac9393"></i><i style="background:#c8b7b7"></i><i style="background:#e3dbdb"></i><i style="background:#2b1100"></i><i style="background:#520"></i><i style="background:#803300"></i><i style="background:#a40"></i><i style="background:#d45500"></i><i style="background:#f60"></i><i style="background:#ff7f2a"></i><i style="background:#f95"></i><i style="background:#ffb380"></i><i style="background:#fca"></i><i style="background:#ffe6d5"></i><i style="background:#28170b"></i><i style="background:#502d16"></i><i style="background:#784421"></i><i style="background:#a05a2c"></i><i style="background:#c87137"></i><i style="background:#d38d5f"></i><i style="background:#deaa87"></i><i style="background:#e9c6af"></i><i style="background:#f4e3d7"></i><i style="background:#241f1c"></i><i style="background:#483e37"></i><i style="background:#6c5d53"></i><i style="background:#917c6f"></i><i style="background:#ac9d93"></i><i style="background:#c8beb7"></i><i style="background:#e3dedb"></i><i style="background:#2b2200"></i><i style="background:#540"></i><i style="background:#806600"></i><i style="background:#a80"></i><i style="background:#d4aa00"></i><i style="background:#fc0"></i><i style="background:#ffd42a"></i><i style="background:#fd5"></i><i style="background:#ffe680"></i><i style="background:#fea"></i><i style="background:#fff6d5"></i><i style="background:#28220b"></i><i style="background:#504416"></i><i style="background:#786721"></i><i style="background:#a0892c"></i><i style="background:#c8ab37"></i><i style="background:#d3bc5f"></i><i style="background:#decd87"></i><i style="background:#e9ddaf"></i><i style="background:#f4eed7"></i><i style="background:#24221c"></i><i style="background:#484537"></i><i style="background:#6c6753"></i></div>
</body></html>
